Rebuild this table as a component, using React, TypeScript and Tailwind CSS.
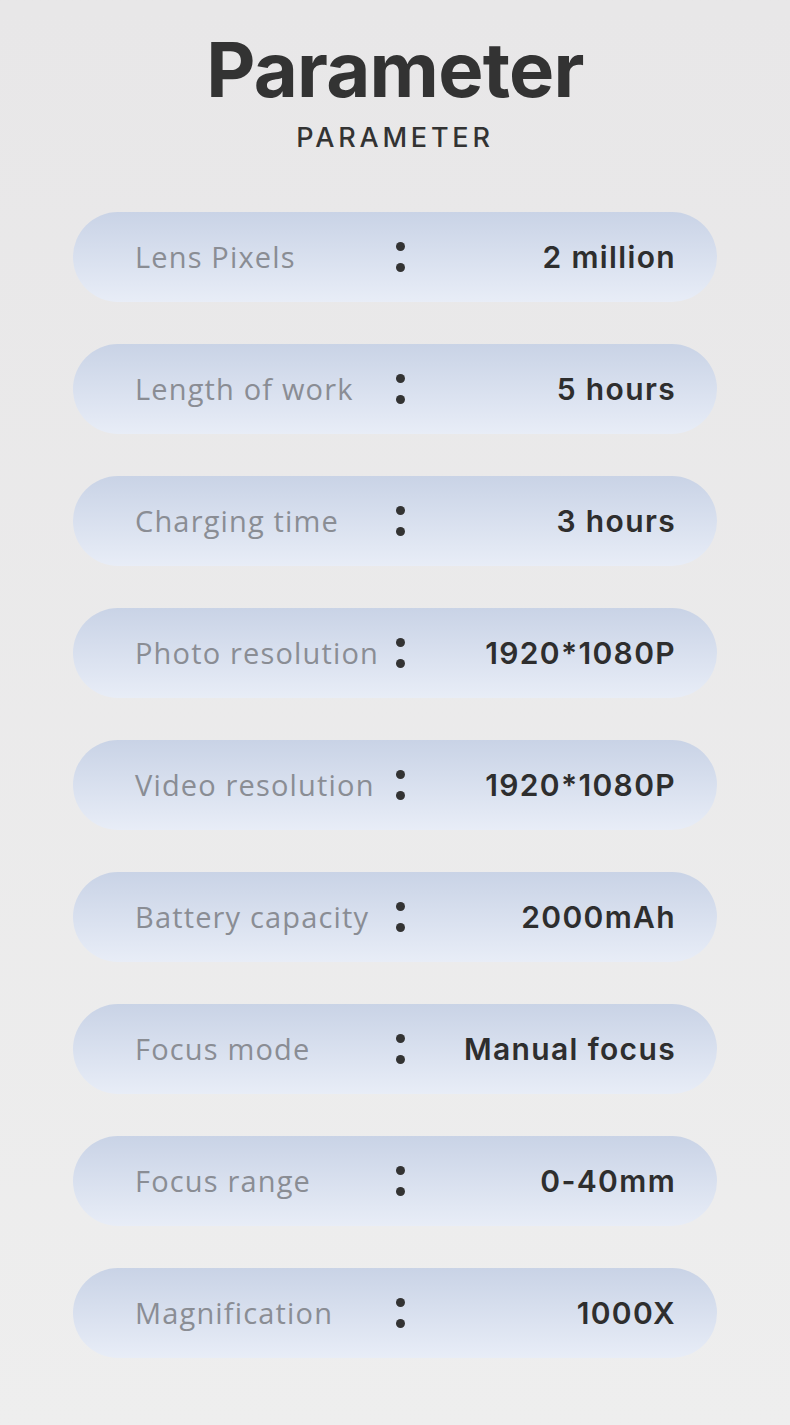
const rows = [
  { label: 'Lens Pixels', value: '2 million' },
  { label: 'Length of work', value: '5 hours' },
  { label: 'Charging time', value: '3 hours' },
  { label: 'Photo resolution', value: '1920*1080P' },
  { label: 'Video resolution', value: '1920*1080P' },
  { label: 'Battery capacity', value: '2000mAh' },
  { label: 'Focus mode', value: 'Manual focus' },
  { label: 'Focus range', value: '0-40mm' },
  { label: 'Magnification', value: '1000X' },
];

export default function App() {
  return (
    <div className="min-h-[1425px] w-[790px] bg-gradient-to-b from-[#e8e7e8] to-[#eeeeee] pt-[31px] font-['Inter',sans-serif]">
      {/* heading */}
      <div className="flex flex-col items-center">
        <h1 className="text-[76px] font-bold leading-none tracking-[-0.01em] text-[#333333]">Parameter</h1>
        <p className="mt-[17px] text-[27px] font-medium leading-none tracking-[0.14em] text-[#333333]">
          PARAMETER
        </p>
      </div>

      {/* spec rows */}
      <div className="mt-[61px] flex flex-col gap-[42px] px-[73px]">
        {rows.map((r) => (
          <div
            key={r.label}
            className="flex h-[90px] items-center rounded-full bg-gradient-to-b from-[#c9d3e6] to-[#e8edf7] pl-[62px] pr-[41px]"
          >
            <span className="w-[260px] whitespace-nowrap font-['Open_Sans',sans-serif] text-[29px] tracking-[0.04em] text-[#8a8d94]">
              {r.label}
            </span>
            <span className="flex w-[10px] flex-col items-center gap-[12px]">
              <span className="h-[9px] w-[9px] rounded-full bg-[#333333]" />
              <span className="h-[9px] w-[9px] rounded-full bg-[#333333]" />
            </span>
            <span className="flex-1 text-right text-[30px] font-semibold tracking-[0.045em] text-[#2e2e2e]">
              {r.value}
            </span>
          </div>
        ))}
      </div>
    </div>
  );
}
